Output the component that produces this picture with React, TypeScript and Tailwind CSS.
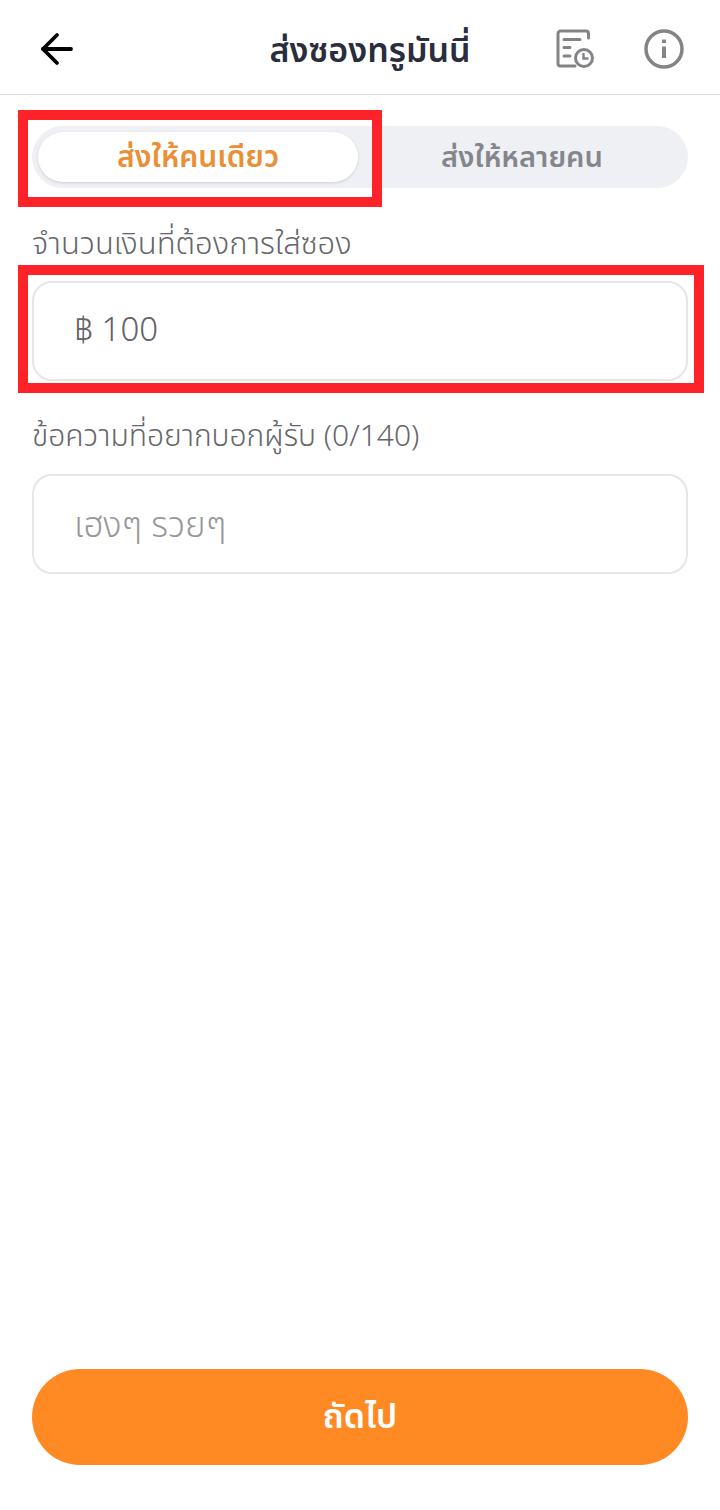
import { ArrowLeft } from 'lucide-react';

const HistoryIcon = () => (
  <svg width="40" height="40" viewBox="0 0 40 40" fill="none" stroke="#848488" strokeWidth="3" strokeLinecap="round">
    <path d="M20 37H5.5A2.5 2.5 0 0 1 3 34.500V4.500A2.500 2.500 0 0 1 5.500 2H31A2.500 2.500 0 0 1 33.500 4.500V9" strokeLinejoin="round" />
    <path d="M9 10.500H25M9 18.500H15M9 27H15" />
    <circle cx="29" cy="29" r="8.500" />
    <path d="M28.500 25V29.500H32.500" strokeWidth="2.500" />
  </svg>
);

const InfoIcon = () => (
  <svg width="40" height="40" viewBox="0 0 40 40" fill="none" stroke="#848488" strokeWidth="3.500">
    <circle cx="20" cy="20" r="18" />
    <path d="M20 17.500V29M20 10.500V14" strokeWidth="4" />
  </svg>
);

export default function App() {
  const font = { fontFamily: '"Noto Sans", "Noto Sans Thai", "Liberation Sans", sans-serif' };

  return (
    <div className="relative flex h-[1510px] w-[720px] flex-col bg-white" style={font}>
      <header className="relative flex h-[95px] items-center border-b border-[#dcdcdc] pl-[33px] pr-[36px] pt-[4px]">
        <ArrowLeft size={48} strokeWidth={1.9} color="#000" />
        <h1 className="flex-1 pl-[104px] text-center text-[34px] font-semibold text-[#2a2d3e]">ส่งซองทรูมันนี่</h1>
        <div className="flex items-center gap-[49px]">
          <HistoryIcon />
          <InfoIcon />
        </div>
      </header>

      <main className="flex flex-1 flex-col px-[32px] pt-[31px] pb-[45px]">
        <div className="flex h-[62px] items-center rounded-full bg-[#eff0f4] px-[6px]">
          <div className="flex h-[50px] w-[320px] items-center justify-center rounded-full bg-white pb-[3px] text-[30px] font-semibold text-[#ea8f35] shadow-[0_1px_3px_rgba(0,0,0,0.14)]">
            ส่งให้คนเดียว
          </div>
          <div className="flex-1 pb-[3px] pl-[4px] text-center text-[29px] font-semibold text-[#85868c]">ส่งให้หลายคน</div>
        </div>

        <label className="mt-[34px] h-[40px] text-[31px] font-light leading-[40px] text-[#66666b]">จำนวนเงินที่ต้องการใส่ซอง</label>
        <div className="mt-[19px] flex h-[100px] items-center rounded-[20px] border-2 border-[#e5e6e7] pb-[4px] pl-[40px] text-[33px] font-light text-[#626267]">
          ฿ 100
        </div>

        <label className="mt-[34px] h-[40px] text-[30px] font-light leading-[40px] text-[#66666b]">ข้อความที่อยากบอกผู้รับ (0/140)</label>
        <div className="mt-[19px] flex h-[100px] items-center rounded-[20px] border-2 border-[#e5e6e7] pl-[40px] text-[35px] font-light text-[#98989c]">
          เฮงๆ รวยๆ
        </div>

        <button className="mt-auto h-[96px] rounded-full bg-[#ff8a23] pb-[4px] text-[34px] font-semibold text-white">ถัดไป</button>
      </main>

      {/* red annotation boxes drawn over the screenshot */}
      <div className="absolute left-[18px] top-[110px] h-[97px] w-[364px] border-[10px] border-[#fe2329]" />
      <div className="absolute left-[18px] top-[265px] h-[128px] w-[686px] border-[10px] border-[#fe2329]" />
    </div>
  );
}
